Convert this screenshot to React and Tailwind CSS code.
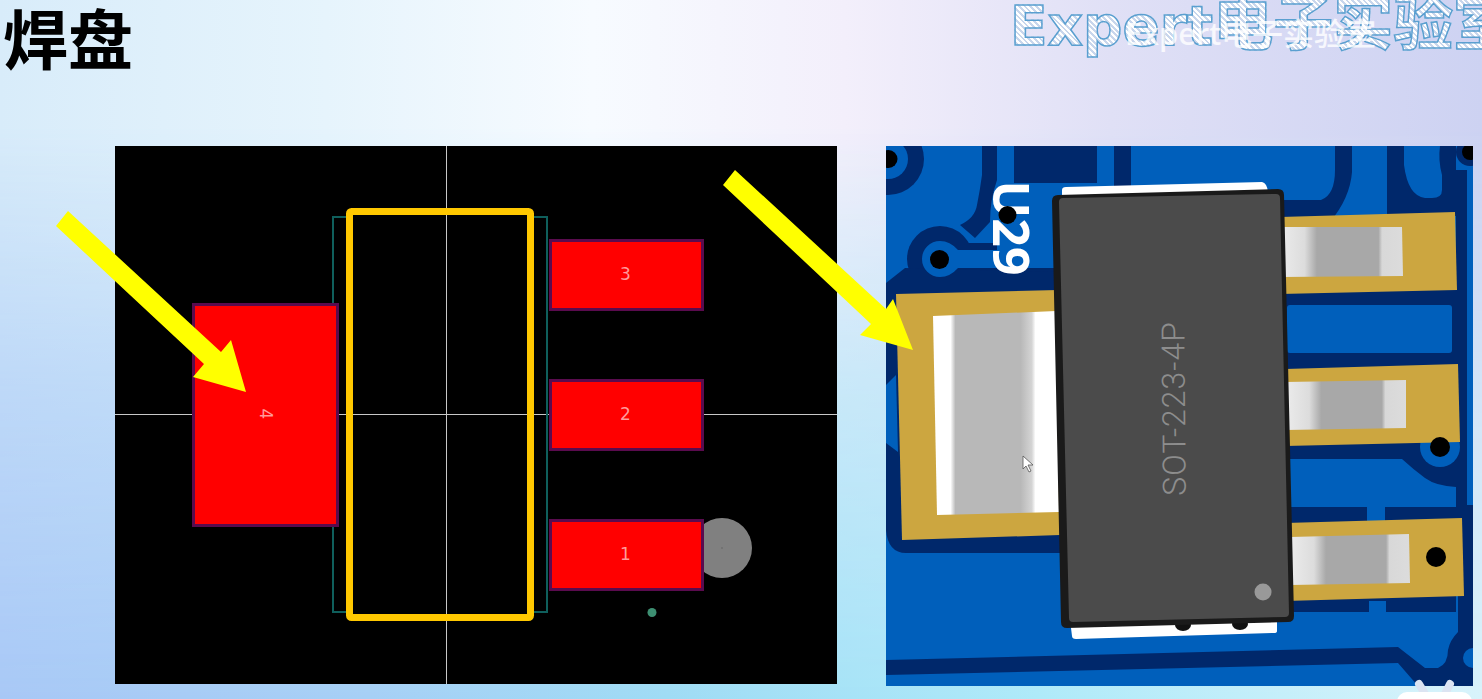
const DARK = "#00286b";
const BLUE = "#005fbb";
const GOLD = "#cca640";

function Footprint() {
  const pad = { fill: "#ff0000", stroke: "#5a0b4e", strokeWidth: 3 };
  return (
    <svg viewBox="115 146 722 538" className="block w-full h-full">
      <rect x="115" y="146" width="722" height="538" fill="#000" />
      <circle cx="722" cy="548" r="30" fill="#808080" />
      <rect x="721" y="547.5" width="2" height="1" fill="#666" />
      <line x1="115" y1="414.5" x2="837" y2="414.5" stroke="#c8c8c8" strokeWidth="1" />
      <line x1="446.5" y1="146" x2="446.5" y2="684" stroke="#c8c8c8" strokeWidth="1" />
      <path d="M348 217 H333 V304 M333 526 V612 H348 M532 217 H547 V612 H532" fill="none" stroke="#0f5f5c" strokeWidth="2" />
      <rect x="193.5" y="304.5" width="144" height="221" {...pad} />
      <rect x="550.5" y="240.5" width="152" height="69" {...pad} />
      <rect x="550.5" y="380.5" width="152" height="69" {...pad} />
      <rect x="550.5" y="520.5" width="152" height="69" {...pad} />
      <rect x="349.5" y="211.5" width="181" height="406" rx="2" fill="none" stroke="#ffc800" strokeWidth="7" />
      <circle cx="652" cy="612.5" r="4.5" fill="#3d8f72" />
      <g fill="#ff9a9a" fontFamily="'DejaVu Sans', sans-serif" fontSize="17" textAnchor="middle">
        <text x="625.5" y="280">3</text>
        <text x="625.5" y="420">2</text>
        <text x="625.5" y="560">1</text>
        <text x="266" y="420" transform="rotate(90 266 414)">4</text>
      </g>
    </svg>
  );
}

function Board() {
  return (
    <svg viewBox="886 146 587 540" className="block w-full h-full">
      <defs>
        <linearGradient id="leadBig" x1="933" x2="1058" y1="0" y2="0" gradientUnits="userSpaceOnUse">
          <stop offset="0" stopColor="#fff" />
          <stop offset="0.14" stopColor="#fff" />
          <stop offset="0.18" stopColor="#b8b8b8" />
          <stop offset="0.7" stopColor="#b8b8b8" />
          <stop offset="0.79" stopColor="#d4d4d4" />
          <stop offset="0.82" stopColor="#fff" />
          <stop offset="1" stopColor="#fff" />
        </linearGradient>
        <linearGradient id="leadSmall" x1="0" x2="1" y1="0" y2="0">
          <stop offset="0" stopColor="#ececec" />
          <stop offset="0.2" stopColor="#dcdcdc" />
          <stop offset="0.3" stopColor="#a8a8a8" />
          <stop offset="0.8" stopColor="#a8a8a8" />
          <stop offset="0.83" stopColor="#d8d8d8" />
          <stop offset="1" stopColor="#dcdcdc" />
        </linearGradient>
      </defs>
      <rect x="886" y="146" width="587" height="540" fill={BLUE} />

      {/* clearance, upper left */}
      <circle cx="888" cy="159" r="36" fill={DARK} />
      <circle cx="888" cy="159" r="20" fill={BLUE} />
      <circle cx="888.5" cy="159" r="9" fill="#000" />
      <path d="M982 146 H997 V180 Q990 200 990 222 L975 238 L960 225 Q975 218 977 205 Q980 190 982 175 Z" fill={DARK} />
      <rect x="955" y="243" width="42" height="8" fill={DARK} />
      <path d="M1014 146 H1097 V183 H1014 Z" fill={DARK} />
      <rect x="1114" y="146" width="17" height="54" fill={DARK} />
      <circle cx="940" cy="259" r="33" fill={DARK} />
      <rect x="945" y="266" width="115" height="30" fill={DARK} />
      <path d="M886 283 L905 268 L1060 272 V553 H906 Q888 553 886 530 Z" fill={DARK} />
      <polygon points="886,385 896,375 898,452 886,443" fill={BLUE} />
      <path d="M940 241 Q950 241 958 250 H1060 V268 H958 Q950 277 940 277 A18 18 0 0 1 940 241 Z" fill={BLUE} />
      <circle cx="939.5" cy="259.5" r="9.5" fill="#000" />

      {/* clearance, upper right */}
      <path d="M1335 146 H1352 V172 Q1350 198 1330 222 H1270 V200 H1321 Q1335 195 1335 170 Z" fill={DARK} />
      <rect x="1387" y="146" width="69" height="70" fill={DARK} />
      <path d="M1404 146 H1440 Q1438 160 1442 175 V190 Q1442 198 1432 198 H1425 Q1408 196 1404 165 Z" fill={BLUE} />
      <rect x="1456" y="170" width="11" height="350" fill={DARK} />
      <circle cx="1470" cy="152" r="14" fill={DARK} />
      <circle cx="1470" cy="152" r="8" fill="#000" />

      {/* between and below the small pads */}
      <rect x="1280" y="288" width="176" height="84" fill={DARK} />
      <rect x="1287" y="305" width="165" height="48" rx="3" fill={BLUE} />
      <path d="M1280 440 H1456 V487 Q1436 486 1425 478 Q1414 470 1402 459 H1280 Z" fill={DARK} />
      <rect x="1280" y="507" width="176" height="20" fill={DARK} />
      <rect x="1280" y="595" width="176" height="17" fill={DARK} />
      <rect x="1367" y="505" width="18" height="18" fill={BLUE} />
      <rect x="1369" y="601" width="17" height="11" fill={BLUE} />
      <path d="M886 660 L1398 647 L1425 668 H1438 Q1448 664 1448 650 Q1450 640 1458 632 V505 H1473 V686 H1418 L1398 663 L886 675 Z" fill={DARK} />
      <circle cx="1473" cy="658" r="10" fill={BLUE} />
      <circle cx="1440" cy="447" r="20" fill={BLUE} />

      {/* copper pads */}
      <polygon points="896,294 1058,290 1060,535 902,540" fill={GOLD} />
      <polygon points="1280,217 1455,212 1457,290 1280,294" fill={GOLD} />
      <polygon points="1285,369 1458,364 1460,442 1285,446" fill={GOLD} />
      <polygon points="1285,523 1462,518 1464,596 1285,601" fill={GOLD} />

      {/* leads */}
      <polygon points="933,316 1056,311 1059,512 937,515" fill="url(#leadBig)" />
      <polygon points="1280,227 1402,227 1403,276 1280,277" fill="url(#leadSmall)" />
      <polygon points="1285,382 1406,380 1406,428 1285,430" fill="url(#leadSmall)" />
      <polygon points="1290,537 1409,534 1410,583 1290,585" fill="url(#leadSmall)" />

      <circle cx="1440" cy="447" r="10" fill="#000" />
      <circle cx="1436" cy="557" r="10" fill="#000" />

      {/* white body ends */}
      <path d="M1062 190 Q1062 187 1066 187 L1262 182 Q1267 183 1268 192 L1268 200 H1062 Z" fill="#fff" />
      <path d="M1070 620 H1277 V631 Q1277 633 1274 633 L1076 639 Q1072 639 1072 636 Z" fill="#fff" />
      <ellipse cx="1183" cy="625" rx="8" ry="6" fill="#111" />
      <ellipse cx="1240" cy="624" rx="8" ry="6" fill="#111" />

      {/* package */}
      <path d="M1058 195 L1278 189 Q1284 189 1284 195 L1294 616 Q1294 622 1288 622 L1067 628 Q1061 628 1061 622 L1052 201 Q1052 195 1058 195 Z" fill="#1a1a1a" />
      <path d="M1063 198 L1276 194 Q1280 194 1280 198 L1289 613 Q1289 617 1285 617 L1073 622 Q1069 622 1069 618 L1059 202 Q1059 198 1063 198 Z" fill="#4b4b4b" />
      <circle cx="1263" cy="592" r="8.5" fill="#999" />
      <text x="1174" y="408.5" transform="rotate(-90.5 1174 408.5)" textAnchor="middle" dominantBaseline="central" fontFamily="Roboto, sans-serif" fontWeight="300" fontSize="32" letterSpacing="1" fill="#8d8d8d">SOT-223-4P</text>

      {/* silk */}
      <text x="1012" y="228" transform="rotate(90 1012 228)" textAnchor="middle" dominantBaseline="central" fontFamily="'Open Sans', sans-serif" fontWeight="700" fontSize="50" fill="#fff">U29</text>
      <circle cx="1007.5" cy="215" r="9" fill="#000" />

      {/* mouse pointer */}
      <path d="M1023 456 L1023 469 L1026 466 L1029 472 L1031 471 L1028 465 L1033 465 Z" fill="#fff" stroke="#555" strokeWidth="0.8" />
    </svg>
  );
}

export default function App() {
  return (
    <div className="relative w-[1482px] h-[699px] overflow-hidden bg-[linear-gradient(90deg,#d8ecfa_0%,#e6f4fc_22%,#f7fbff_40%,#f3effb_57%,#e0e0f6_75%,#cdd2f2_100%)]">
      <div className="absolute inset-0 bg-[linear-gradient(90deg,#a8c8f6_0%,#a6d0f6_25%,#9fdcf5_45%,#aeeaf9_70%,#d8f3fb_100%)] [mask-image:linear-gradient(180deg,transparent_18%,rgba(0,0,0,0.55)_55%,black_100%)]" />

      <div className="relative flex flex-col">
        <header className="h-[146px] pl-[3px]">
          <h1 className="text-[65px] leading-[72px] font-bold text-black font-['Noto_Sans_CJK_SC',sans-serif]">焊盘</h1>
        </header>
        <main className="flex items-start pl-[115px] gap-[49px]">
          <section className="w-[722px] h-[538px]"><Footprint /></section>
          <section className="w-[587px] h-[540px]"><Board /></section>
        </main>
      </div>

      {/* channel watermark */}
      <div className="absolute left-[1010px] top-[-13px] flex items-baseline whitespace-nowrap font-bold text-transparent [-webkit-text-stroke:1.5px_#5a9fd0] [background-image:repeating-linear-gradient(45deg,#ffffff_0px,#ffffff_2px,#c8d6ec_2px,#c8d6ec_4px)] bg-clip-text font-['DejaVu_Sans','Noto_Sans_CJK_SC',sans-serif]">
        <span className="text-[55px] leading-[64px]">Expert</span>
        <span className="text-[60px] leading-[64px] font-['Noto_Sans_CJK_SC',sans-serif]">电子实验室</span>
      </div>
      <div className="absolute left-[1125px] top-[15px] whitespace-nowrap text-[31px] leading-[36px] font-medium text-white/80 font-['Noto_Sans','Noto_Sans_CJK_SC',sans-serif]">
        Expert电子实验室
      </div>

      {/* arrows */}
      <svg className="absolute left-0 top-0 pointer-events-none" width="1482" height="699" viewBox="0 0 1482 699">
        <polygon points="56,226 68,211 221,352 231,340 246,392 193,377 204,364" fill="#ffff00" />
        <polygon points="723,185 735,170 886,309 893,299 913,350 860,335 871,324" fill="#ffff00" />
      </svg>

      {/* corner mark */}
      <svg className="absolute left-[1390px] top-[676px]" width="92" height="23" viewBox="0 0 92 23">
        <path d="M29 8 L35 18 M60 8 L55 18" stroke="#dce4f2" strokeWidth="8" strokeLinecap="round" />
        <rect x="7" y="16" width="75" height="20" rx="10" fill="#fff" />
      </svg>
    </div>
  );
}
